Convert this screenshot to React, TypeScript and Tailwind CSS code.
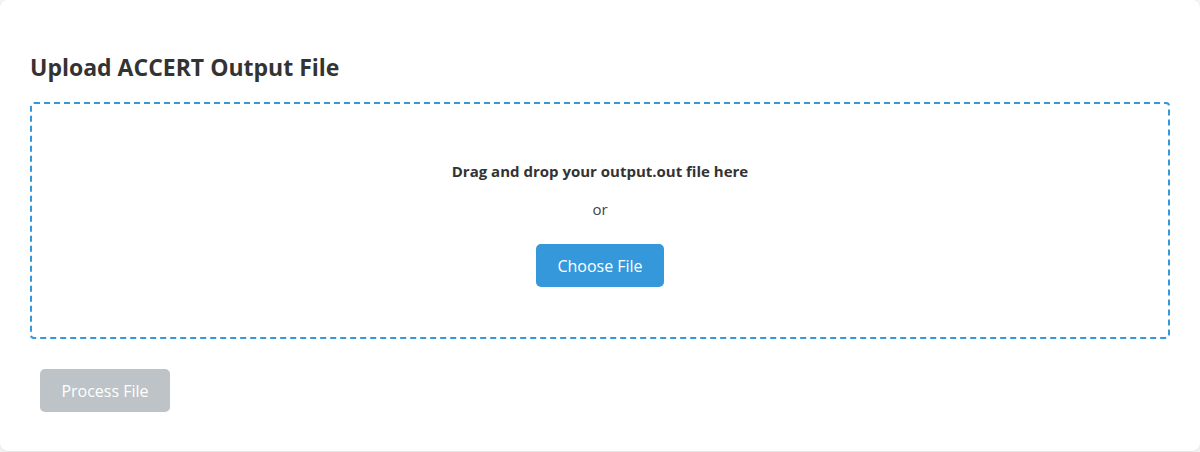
import React, { useRef, useState } from 'react'

export default function App() {
  const inputRef = useRef<HTMLInputElement>(null)
  const [file, setFile] = useState<File | null>(null)

  return (
    <div className="min-h-[452px] bg-[#f4f4f4] font-['Open_Sans',sans-serif] text-[#333]">
      <div className="bg-white rounded-lg shadow-[0_1px_3px_rgba(0,0,0,0.08)] h-[451px] px-[30px] pt-[52px]">
        <h2 className="text-[23px] font-bold leading-[30px] mb-[20px] text-[#333]">Upload ACCERT Output File</h2>

        <div className="border-2 border-dashed border-[#3498db] rounded-[4px] h-[237px] flex flex-col items-center pt-[56px]">
          <p className="text-[15px] font-bold leading-[22px]">Drag and drop your output.out file here</p>
          <p className="text-[15px] leading-[22px] mt-[16px] text-[#444]">or</p>
          <button
            onClick={() => inputRef.current?.click()}
            className="mt-[24px] w-[128px] h-[43px] bg-[#3498db] text-white text-[16px] rounded-[5px]"
          >
            Choose File
          </button>
          <input
            ref={inputRef}
            type="file"
            className="hidden"
            onChange={e => setFile(e.target.files?.[0] ?? null)}
          />
        </div>

        <button
          disabled={!file}
          className="mt-[30px] ml-[10px] w-[130px] h-[43px] bg-[#bdc3c7] text-white text-[16px] rounded-[5px]"
        >
          Process File
        </button>
      </div>
    </div>
  )
}
